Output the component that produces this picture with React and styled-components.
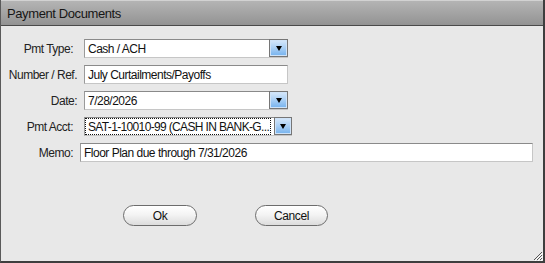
import React from "react";
import styled, { createGlobalStyle } from "styled-components";

const GlobalStyle = createGlobalStyle`
    body {
        margin: 0;
        background: #e8e8e8;
        font-family: "Liberation Sans", Arial, sans-serif;
    }
`;

const Window = styled.div`
    position: relative;
    width: 545px;
    height: 263px;
    box-sizing: border-box;
    background: #e8e8e8;
    border-left: 1px solid #5a5a5a;
    border-right: 2px solid #3e3e3e;
    border-bottom: 2px solid #3e3e3e;
    display: flex;
    flex-direction: column;
`;

const TitleBar = styled.div`
    height: 26px;
    box-sizing: border-box;
    border-top: 1px solid #d2d2d2;
    border-bottom: 1px solid #4a4a4a;
    background: linear-gradient(#b4b4b4, #939393);
    padding-left: 6px;
    display: flex;
    align-items: center;
    font-size: 13px;
    letter-spacing: -0.4px;
    color: #161616;
`;

const Form = styled.div`
    display: flex;
    flex-direction: column;
    gap: 7px;
    padding-top: 13px;
`;

const Row = styled.div`
    display: flex;
    align-items: center;
    height: 19px;
`;

const Label = styled.div`
    width: ${p => p.width}px;
    box-sizing: border-box;
    padding-right: ${p => p.pad || 0}px;
    margin-right: 7px;
    text-align: right;
    font-size: 12px;
    letter-spacing: -0.5px;
    color: #222;
    white-space: nowrap;
`;

const TextBox = styled.div`
    width: ${p => p.width}px;
    height: 19px;
    box-sizing: border-box;
    background: #fff;
    border: 1px solid #c6c6c6;
    border-top-color: #8a8a8a;
    border-left-color: #9a9a9a;
    padding-left: 3px;
    display: flex;
    align-items: center;
    font-size: 12px;
    letter-spacing: -0.5px;
    color: #111;
    white-space: nowrap;
`;

const SelectBox = styled.div`
    width: ${p => p.width}px;
    height: 19px;
    box-sizing: border-box;
    background: #fff;
    border: 1px solid #c6c6c6;
    border-top-color: #8a8a8a;
    border-left-color: #9a9a9a;
    border-right: none;
    display: flex;
    align-items: stretch;
`;

const SelectValue = styled.div`
    flex: 1;
    min-width: 0;
    margin: ${p => (p.focused ? "0 3px 0 0" : "0")};
    padding-left: ${p => (p.focused ? 2 : 3)}px;
    border: ${p => (p.focused ? "1px dotted #111" : "none")};
    display: flex;
    align-items: center;
    font-size: 12px;
    letter-spacing: ${p => (p.focused ? -0.65 : -0.5)}px;
    color: #111;
    white-space: nowrap;
`;

const DropButton = styled.div`
    width: ${p => p.width || 19}px;
    flex-shrink: 0;
    box-sizing: border-box;
    margin-top: -1px;
    border: 1px solid #767676;
    box-shadow: inset 0 0 0 1px #cfe3f8;
    background: linear-gradient(#d8e9fb, #a9cff5 50%, #74b2ee);
    display: flex;
    align-items: center;
    justify-content: center;

    &::after {
        content: "";
        border-left: 3.5px solid transparent;
        border-right: 3.5px solid transparent;
        border-top: 5px solid #000;
        margin-top: 1px;
    }
`;

const ButtonRow = styled.div`
    display: flex;
    gap: 58px;
    padding-left: 122px;
    margin-top: 43px;
`;

const PillButton = styled.div`
    width: ${p => p.width}px;
    height: 21px;
    box-sizing: border-box;
    border: 1px solid #6c6c6c;
    border-radius: 11px;
    background: linear-gradient(#ffffff, #f4f4f4 45%, #dcdcdc);
    box-shadow: inset 0 1px 0 #fff;
    display: flex;
    align-items: center;
    justify-content: center;
    font-size: 12px;
    letter-spacing: -0.4px;
    color: #111;
`;

const Grip = styled.svg`
    position: absolute;
    right: 0;
    bottom: 0;
`;

export default function App() {
    return (
        <>
            <GlobalStyle />
            <Window>
                <TitleBar>Payment Documents</TitleBar>
                <Form>
                    <Row>
                        <Label width={76} pad={4}>Pmt Type:</Label>
                        <SelectBox width={204}>
                            <SelectValue>Cash / ACH</SelectValue>
                            <DropButton />
                        </SelectBox>
                    </Row>
                    <Row>
                        <Label width={76}>Number / Ref.</Label>
                        <TextBox width={204}>July Curtailments/Payoffs</TextBox>
                    </Row>
                    <Row>
                        <Label width={76}>Date:</Label>
                        <SelectBox width={204}>
                            <SelectValue>7/28/2026</SelectValue>
                            <DropButton />
                        </SelectBox>
                    </Row>
                    <Row>
                        <Label width={76} pad={4}>Pmt Acct:</Label>
                        <SelectBox width={208}>
                            <SelectValue focused>SAT-1-10010-99 (CASH IN BANK-G...</SelectValue>
                            <DropButton width={18} />
                        </SelectBox>
                    </Row>
                    <Row>
                        <Label width={72}>Memo:</Label>
                        <TextBox width={453}>Floor Plan due through 7/31/2026</TextBox>
                    </Row>
                </Form>
                <ButtonRow>
                    <PillButton width={74}>Ok</PillButton>
                    <PillButton width={73}>Cancel</PillButton>
                </ButtonRow>
                <Grip width="11" height="11" viewBox="0 0 11 11">
                    <path d="M10 2 L2 10 M10 5 L5 10 M10 8 L8 10" stroke="#555" strokeWidth="1" />
                    <path d="M11 3 L3 11 M11 6 L6 11 M11 9 L9 11" stroke="#fff" strokeWidth="1" />
                </Grip>
            </Window>
        </>
    );
}
